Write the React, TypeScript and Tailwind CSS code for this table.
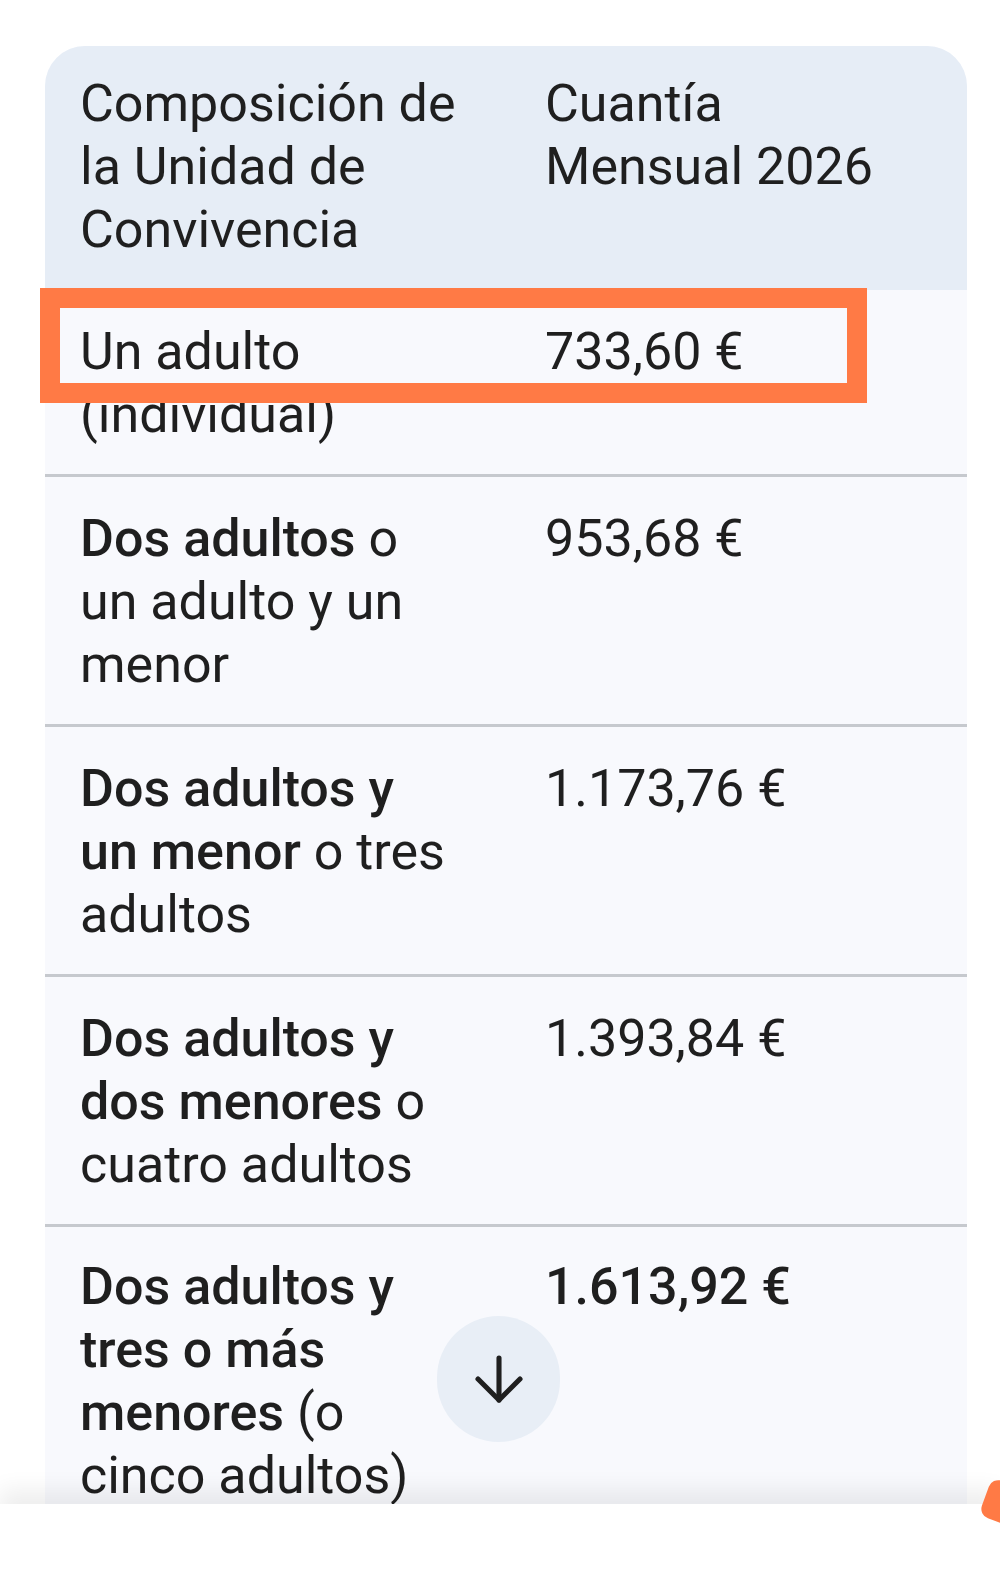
import { ArrowDown } from 'lucide-react'

type Part = { text: string; bold?: boolean }

type Row = {
  lines: Part[][]
  value: string
  valueBold?: boolean
}

const rows: Row[] = [
  { lines: [[{ text: 'Un adulto' }], [{ text: '(individual)' }]], value: '733,60 €' },
  {
    lines: [
      [{ text: 'Dos adultos', bold: true }, { text: ' o' }],
      [{ text: 'un adulto y un' }],
      [{ text: 'menor' }],
    ],
    value: '953,68 €',
  },
  {
    lines: [
      [{ text: 'Dos adultos y', bold: true }],
      [{ text: 'un menor', bold: true }, { text: ' o tres' }],
      [{ text: 'adultos' }],
    ],
    value: '1.173,76 €',
  },
  {
    lines: [
      [{ text: 'Dos adultos y', bold: true }],
      [{ text: 'dos menores', bold: true }, { text: ' o' }],
      [{ text: 'cuatro adultos' }],
    ],
    value: '1.393,84 €',
  },
  {
    lines: [
      [{ text: 'Dos adultos y', bold: true }],
      [{ text: 'tres o más', bold: true }],
      [{ text: 'menores', bold: true }, { text: ' (o' }],
      [{ text: 'cinco adultos)' }],
    ],
    value: '1.613,92 €',
    valueBold: true,
  },
]

export default function App() {
  return (
    <div
      className="relative h-[1575px] w-[1000px] overflow-hidden bg-white text-[#1f1f1f]"
      style={{ fontFamily: 'Roboto, "Noto Sans", sans-serif' }}
    >
      {/* table area, cut off by the bottom sheet */}
      <div className="h-[1504px] overflow-hidden pt-[46px] pl-[45px] pr-[33px]">
        <div className="relative overflow-hidden rounded-t-[40px] bg-[#f8f9fd] text-[52px] leading-[63px]">
          {/* header */}
          <div className="grid grid-cols-[465px_1fr] bg-[#e6edf6] pl-[35px] pt-[26px] pb-[29px]">
            <div className="whitespace-nowrap">
              Composición de
              <br />
              la Unidad de
              <br />
              Convivencia
            </div>
            <div className="whitespace-nowrap">
              Cuantía
              <br />
              Mensual 2026
            </div>
          </div>

          {rows.map((row, i) => (
            <div
              key={i}
              className={`grid grid-cols-[465px_1fr] pl-[35px] pb-[28px] ${i === rows.length - 1 ? 'pt-[28px]' : 'pt-[30px]'} ${
                i < rows.length - 1 ? 'border-b-[3px] border-[#c6c9ce]' : ''
              }`}
            >
              <div className="whitespace-nowrap">
                {row.lines.map((line, l) => (
                  <div key={l}>
                    {line.map((part, j) => (
                      <span key={j} className={part.bold ? 'font-medium' : 'font-normal'}>
                        {part.text}
                      </span>
                    ))}
                  </div>
                ))}
              </div>
              <div className={`whitespace-nowrap ${row.valueBold ? 'font-medium' : 'font-normal'}`}>
                {row.value}
              </div>
            </div>
          ))}

          {/* scroll-down button */}
          <div className="absolute left-[392px] top-[1270px] flex h-[126px] w-[123px] items-center justify-center rounded-full bg-[#e8eef6]">
            <ArrowDown className="h-[72px] w-[72px]" strokeWidth={1.7} />
          </div>
        </div>
      </div>

      {/* bottom sheet edge */}
      <div className="relative h-[71px] bg-white shadow-[0_-14px_22px_rgba(0,0,0,0.07)]" />

      {/* orange floating thing, bottom-right */}
      <div className="absolute right-[-30px] top-[1484px] h-[40px] w-[46px] rotate-[20deg] rounded-[10px] bg-[#ff7a45]" />

      {/* highlight annotation */}
      <div className="absolute left-[40px] top-[288px] h-[115px] w-[827px] border-[20px] border-[#ff7a45]" />
    </div>
  )
}
